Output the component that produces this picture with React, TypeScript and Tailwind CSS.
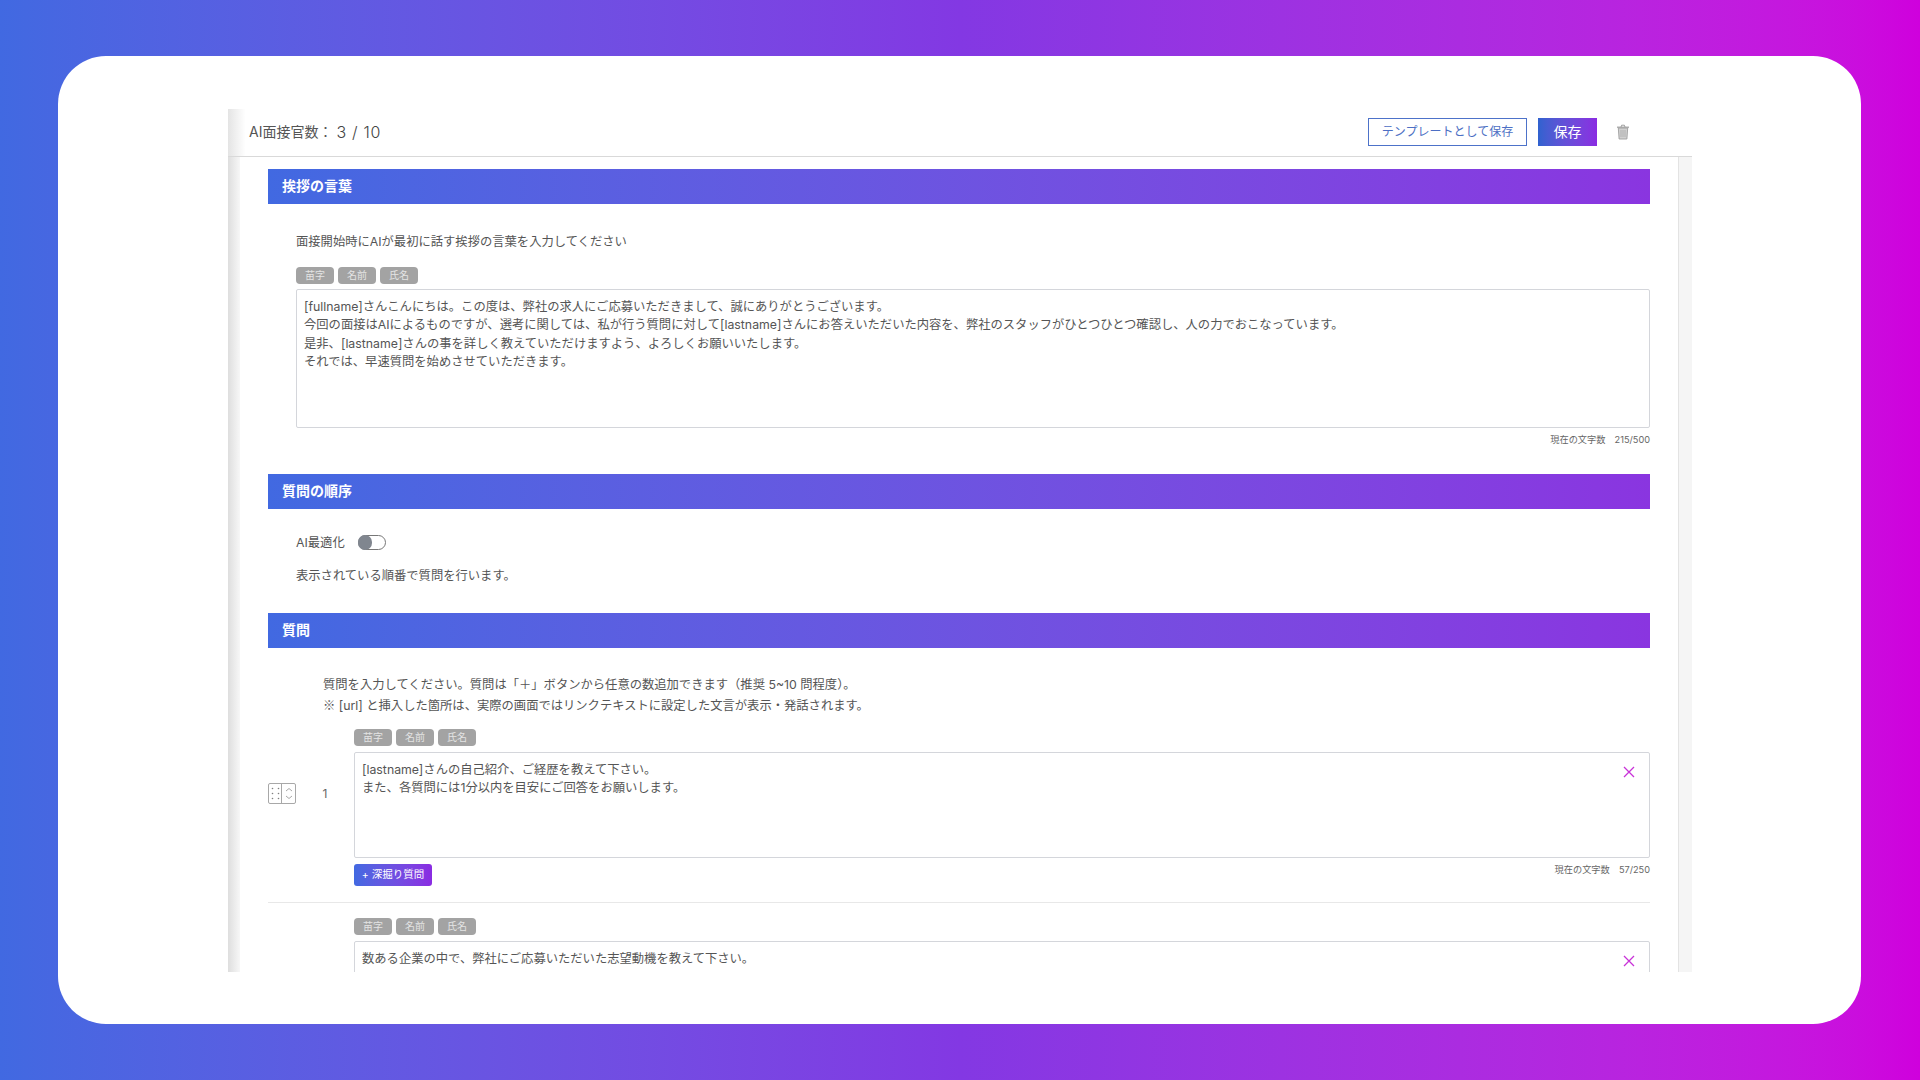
import React from 'react';

const FONT = "font-['Inter','Noto_Sans_CJK_JP',sans-serif]";
const GREETING = `[fullname]さんこんにちは。この度は、弊社の求人にご応募いただきまして、誠にありがとうございます。
今回の面接はAIによるものですが、選考に関しては、私が行う質問に対して[lastname]さんにお答えいただいた内容を、弊社のスタッフがひとつひとつ確認し、人の力でおこなっています。
是非、[lastname]さんの事を詳しく教えていただけますよう、よろしくお願いいたします。
それでは、早速質問を始めさせていただきます。`;

function SectionBar({ title }: { title: string }) {
  return (
    <div className="flex h-[35px] items-center bg-gradient-to-r from-[#4169e1] to-[#8a35e0] pb-[2px] pl-[14px] text-[14px] font-bold text-white">
      {title}
    </div>
  );
}

function Tags() {
  return (
    <div className="flex gap-[4px]">
      {['苗字', '名前', '氏名'].map((tag) => (
        <span
          key={tag}
          className="flex h-[17px] w-[38px] items-center justify-center rounded-[4px] bg-[#a3a3a3] text-[10px] text-[#e4e4e4]"
        >
          {tag}
        </span>
      ))}
    </div>
  );
}

function CloseIcon() {
  return (
    <svg className="absolute right-[15px] top-[14px]" width="12" height="12" viewBox="0 0 12 12" fill="none" stroke="#c832d8" strokeWidth="1.3">
      <path d="M1 1l10 10M11 1L1 11" />
    </svg>
  );
}

function Handle() {
  return (
    <div className="flex h-[21px] w-[28px] rounded-[2px] border border-[#a8a8a8]">
      <div className="flex w-[13px] items-center justify-center border-r border-[#a8a8a8]">
        <svg width="9" height="13" viewBox="0 0 9 13" fill="#808080">
          {[1.5, 6.5, 11.5].map((y) => (
            <React.Fragment key={y}>
              <circle cx="1.5" cy={y} r="0.8" />
              <circle cx="7.5" cy={y} r="0.8" />
            </React.Fragment>
          ))}
        </svg>
      </div>
      <div className="flex flex-1 items-center justify-center">
        <svg width="8" height="13" viewBox="0 0 8 13" fill="none" stroke="#a8a8a8" strokeWidth="1">
          <path d="M1 4l3-2.5L7 4M1 9l3 2.5L7 9" />
        </svg>
      </div>
    </div>
  );
}

function Question({
  no,
  text,
  count,
}: {
  no?: number;
  text: string;
  count?: string;
}) {
  return (
    <div className="flex">
      <div className="flex w-[86px] shrink-0 items-start pt-[54px]">
        {no && (
          <>
            <Handle />
            <span className="flex h-[21px] flex-1 items-center justify-center text-[12px] text-[#666]">{no}</span>
          </>
        )}
      </div>
      <div className="min-w-0 flex-1">
        <Tags />
        <div className="relative mt-[6px]">
          <textarea
            readOnly
            defaultValue={text}
            className="block h-[106px] w-full resize-none rounded-[2px] border border-[#d4d6db] bg-white px-[7px] pb-[6px] pt-[8px] text-[12.3px] leading-[18.4px] text-[#555] outline-none"
          />
          <CloseIcon />
        </div>
        {count && (
          <div className="mt-[6px] flex items-start justify-between">
            <button className="flex h-[22px] w-[78px] items-center justify-center rounded-[3px] bg-gradient-to-r from-[#4169e1] to-[#8a2be2] text-[10.5px] text-white">
              + 深掘り質問
            </button>
            <span className="-mt-[1px] text-[9.2px] leading-[14px] text-[#666]">現在の文字数　{count}</span>
          </div>
        )}
      </div>
    </div>
  );
}

export default function App() {
  return (
    <div className={`h-[1080px] w-[1920px] overflow-hidden bg-gradient-to-r from-[#4169e1] via-[#8338e3] to-[#cf00dd] pb-[56px] pl-[58px] pr-[59px] pt-[56px] ${FONT}`}>
      <div className="h-[968px] rounded-[48px] bg-white pl-[170px] pr-[169px] pt-[53px]">
        <div className="flex h-[863px] flex-col overflow-hidden">
          {/* header */}
          <div className="flex h-[48px] shrink-0 items-center border-b border-[#d9d9d9] bg-gradient-to-r from-[#e4e4e4] via-white via-[1.2%] to-white pb-[2px] pl-[21px] pr-[62px]">
            <span className="text-[14px] text-[#555]">AI面接官数：</span>
            <span className="ml-[4px] text-[16px] font-light tracking-[0.7px] text-[#444]">3 / 10</span>
            <button className="ml-auto h-[28px] w-[159px] border border-[#4d72c9] text-[12px] text-[#4d6fc4]">
              テンプレートとして保存
            </button>
            <button className="ml-[11px] h-[28px] w-[59px] bg-gradient-to-r from-[#2f62cf] to-[#8a2be2] text-[14px] text-white">
              保存
            </button>
            <svg className="ml-[19px]" width="14" height="16" viewBox="0 0 14 16" fill="none">
              <path d="M1 3.2h12" stroke="#9e9e9e" strokeWidth="1.2" />
              <path d="M5 3l.6-1.8h2.8L9 3" stroke="#9e9e9e" strokeWidth="1" />
              <path d="M2.3 4h9.4l-.8 11H3.1z" fill="#d0d0d0" stroke="#9e9e9e" strokeWidth="0.9" />
              <path d="M5 6v7M7 6v7M9 6v7" stroke="#a8a8a8" strokeWidth="0.7" />
            </svg>
          </div>

          <div className="flex min-h-0 flex-1">
            <div className="w-[12px] shrink-0 bg-gradient-to-r from-[#dedede] to-[#f7f7f7]" />
            <div className="min-w-0 flex-1 overflow-hidden pl-[28px] pr-[28px] pt-[12px]">
              <SectionBar title="挨拶の言葉" />
              <div className="pl-[28px]">
                <p className="mt-[29px] text-[12.3px] leading-[18px] text-[#555]">
                  面接開始時にAIが最初に話す挨拶の言葉を入力してください
                </p>
                <div className="mt-[16px]">
                  <Tags />
                </div>
                <textarea
                  readOnly
                  defaultValue={GREETING}
                  className="mt-[5px] block h-[139px] w-full resize-none rounded-[2px] border border-[#d4d6db] bg-white px-[7px] pb-[7px] pt-[8px] text-[12.3px] leading-[18.4px] text-[#555] outline-none"
                />
                <div className="mt-[5px] text-right text-[9.2px] leading-[14px] text-[#666]">現在の文字数　215/500</div>
              </div>

              <div className="mt-[27px]">
                <SectionBar title="質問の順序" />
              </div>
              <div className="pl-[28px]">
                <div className="mt-[24px] flex h-[18px] items-center text-[12.3px] text-[#555]">
                  <span className="pt-[2px]">AI最適化</span>
                  <span className="ml-[13px] flex h-[15px] w-[28px] items-center rounded-full border border-[#777] bg-white">
                    <span className="-ml-[1px] h-[15px] w-[14px] rounded-full bg-[#80868f]" />
                  </span>
                </div>
                <p className="mt-[16px] text-[12.3px] leading-[18px] text-[#555]">表示されている順番で質問を行います。</p>
              </div>

              <div className="mt-[28px]">
                <SectionBar title="質問" />
              </div>
              <div className="mt-[27px] pl-[55px] text-[12.3px] leading-[20px] text-[#555]">
                <p>質問を入力してください。質問は「＋」ボタンから任意の数追加できます（推奨 5~10 問程度）。</p>
                <p>
                  <span className="font-['Noto_Sans_CJK_JP',sans-serif]">※</span> [url] と挿入した箇所は、実際の画面ではリンクテキストに設定した文言が表示・発話されます。
                </p>
              </div>
              <div className="mt-[13px]">
                <Question
                  no={1}
                  count="57/250"
                  text={'[lastname]さんの自己紹介、ご経歴を教えて下さい。\nまた、各質問には1分以内を目安にご回答をお願いします。'}
                />
              </div>
              <div className="mt-[16px] border-t border-[#e8e8e8] pt-[15px]">
                <Question text="数ある企業の中で、弊社にご応募いただいた志望動機を教えて下さい。" />
              </div>
            </div>
            <div className="w-[14px] shrink-0 border-l border-[#e3e3e3] bg-[#f5f5f5]" />
          </div>
        </div>
      </div>
    </div>
  );
}
